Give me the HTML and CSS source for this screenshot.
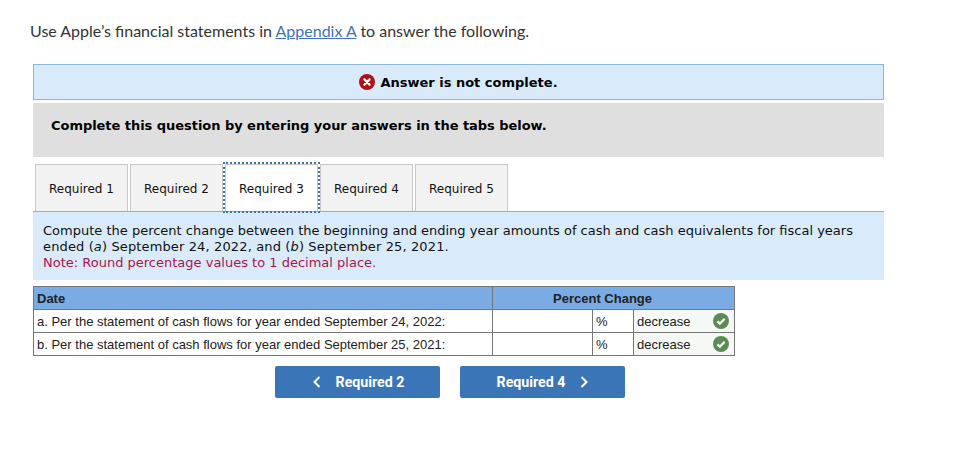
FILE: index.html
```html
<!DOCTYPE html>
<html lang="en">
<head>
    <meta charset="UTF-8">
    <meta name="viewport" content="width=device-width, initial-scale=1.0">
    <title>Apple Financial Statements</title>
    <link rel="stylesheet" href="styles.css">
</head>
<body>
    <p class="intro">Use Apple’s financial statements in <a href="#">Appendix A</a> to answer the following.</p>

    <div class="wrap">
        <!-- Alert -->
        <div class="alert">
            <svg class="icon-x" width="16" height="16" viewBox="0 0 16 16">
                <circle cx="8" cy="8" r="8" fill="#b11116"/>
                <path d="M5.4 5.4l5.2 5.2M10.6 5.4l-5.2 5.2" stroke="#fff" stroke-width="2.2" stroke-linecap="round"/>
            </svg>
            <span>Answer is not complete.</span>
        </div>

        <div class="instructions">Complete this question by entering your answers in the tabs below.</div>

        <!-- Tabs -->
        <div class="tabs">
            <div class="tab">Required 1</div>
            <div class="tab">Required 2</div>
            <div class="tab active">Required 3</div>
            <div class="tab">Required 4</div>
            <div class="tab">Required 5</div>
        </div>

        <div class="question">
            Compute the percent change between the beginning and ending year amounts of cash and cash equivalents for fiscal years<br>
            <span class="dates">ended (<i>a</i>) September 24, 2022, and (<i>b</i>) September 25, 2021.</span><br>
            <span class="note">Note: Round percentage values to 1 decimal place.</span>
        </div>

        <!-- Table -->
        <table class="answers">
            <colgroup>
                <col class="col-date">
                <col class="col-input">
                <col class="col-pct">
                <col class="col-word">
            </colgroup>
            <tr>
                <th class="head-date">Date</th>
                <th class="head-change" colspan="3">Percent Change</th>
            </tr>
            <tr>
                <td>a. Per the statement of cash flows for year ended September 24, 2022:</td>
                <td></td>
                <td>%</td>
                <td class="cell-word">
                    <div class="word">decrease
                        <svg width="16" height="16" viewBox="0 0 16 16"><circle cx="8" cy="8" r="8" fill="#5b8c51"/><path d="M4.4 8.3l2.5 2.4 4.7-5" fill="none" stroke="#fff" stroke-width="2.3"/></svg>
                    </div>
                </td>
            </tr>
            <tr>
                <td>b. Per the statement of cash flows for year ended September 25, 2021:</td>
                <td></td>
                <td>%</td>
                <td class="cell-word">
                    <div class="word">decrease
                        <svg width="16" height="16" viewBox="0 0 16 16"><circle cx="8" cy="8" r="8" fill="#5b8c51"/><path d="M4.4 8.3l2.5 2.4 4.7-5" fill="none" stroke="#fff" stroke-width="2.3"/></svg>
                    </div>
                </td>
            </tr>
        </table>

        <!-- Nav buttons -->
        <div class="nav">
            <button class="nav-btn prev">
                <svg width="8" height="12" viewBox="0 0 8 12"><path d="M6.5 1L1.5 6l5 5" fill="none" stroke="#fff" stroke-width="2"/></svg>
                Required 2
            </button>
            <button class="nav-btn">
                Required 4
                <svg width="8" height="12" viewBox="0 0 8 12"><path d="M1.5 1l5 5-5 5" fill="none" stroke="#fff" stroke-width="2"/></svg>
            </button>
        </div>
    </div>
</body>
</html>
```

FILE: styles.css
```css
/* General Styling */
body {
    margin: 0;
    padding: 0;
    background: #fff;
    color: #111;
    font-family: "DejaVu Sans", sans-serif;
}
.intro {
    margin: 0;
    padding: 21px 0 0 30px;
    box-sizing: border-box;
    height: 64px;
    font-family: Lato, sans-serif;
    font-size: 16px;
    line-height: 20px;
    color: #333;
}
.intro a {
    color: #3b74b8;
}
.wrap {
    width: 851px;
    margin-left: 33px;
}

/* Alert */
.alert {
    display: flex;
    justify-content: center;
    align-items: center;
    gap: 5px;
    height: 36px;
    box-sizing: border-box;
    background: #d9ebfa;
    border: 1px solid #8db5de;
    font-size: 13px;
    font-weight: bold;
    color: #000;
}
.alert span {
    padding-top: 1px;
}
.instructions {
    margin-top: 3px;
    height: 54px;
    box-sizing: border-box;
    padding: 15px 18px 0;
    background: #dfdfdf;
    font-size: 13px;
    line-height: 16px;
    letter-spacing: -0.04px;
    font-weight: bold;
    color: #000;
}

/* Tabs */
.tabs {
    display: flex;
    gap: 2px;
    margin-top: 7px;
    padding-left: 2px;
    border-bottom: 1px solid #a9a9a9;
}
.tab {
    width: 93px;
    height: 47px;
    box-sizing: border-box;
    border: 1px solid #c8c8c8;
    border-bottom: none;
    background: #f2f2f2;
    font-size: 12px;
    line-height: 47px;
    padding-top: 1px;
    text-align: center;
    color: #111;
}
.tab.active {
    background: #fff;
    outline: 2px dotted #3b74b8;
    position: relative;
}

/* Question */
.question {
    height: 68px;
    box-sizing: border-box;
    padding: 11px 10px 0;
    background: #d9ebfa;
    font-size: 13px;
    line-height: 16px;
    color: #111;
}
.dates {
    letter-spacing: 0.13px;
}
.note {
    color: #b0124b;
}

/* Table */
.answers {
    width: 701px;
    margin-top: 6px;
    border-collapse: collapse;
    font-family: "Liberation Sans", sans-serif;
    font-size: 13px;
    color: #222;
    table-layout: fixed;
}
.col-date {
    width: 459px;
}
.col-input {
    width: 100px;
}
.col-pct {
    width: 41px;
}
.col-word {
    width: 101px;
}
.answers th {
    height: 22px;
    padding: 0 3px;
    background: #7aabe4;
    border: 1px solid #777;
    font-weight: bold;
    color: #222;
}
.answers th.head-date {
    text-align: left;
}
.answers th.head-change {
    padding-right: 25px;
    text-align: center;
}
.answers td {
    height: 22px;
    padding: 0 3px;
    border: 1px solid #777;
}
.answers td.cell-word {
    background: #f5f8f4;
}
.word {
    display: flex;
    justify-content: space-between;
    align-items: center;
    padding-right: 2px;
}

/* Nav buttons */
.nav {
    display: flex;
    gap: 20px;
    margin-top: 10px;
    padding-left: 242px;
}
.nav-btn {
    display: flex;
    justify-content: center;
    align-items: center;
    gap: 15px;
    width: 165px;
    height: 32px;
    padding: 0;
    border: none;
    border-radius: 2px;
    background: #3a75b8;
    color: #fff;
    font-family: Roboto, sans-serif;
    font-size: 14.2px;
    font-weight: bold;
}
.nav-btn.prev {
    padding-left: 2px;
}
```
